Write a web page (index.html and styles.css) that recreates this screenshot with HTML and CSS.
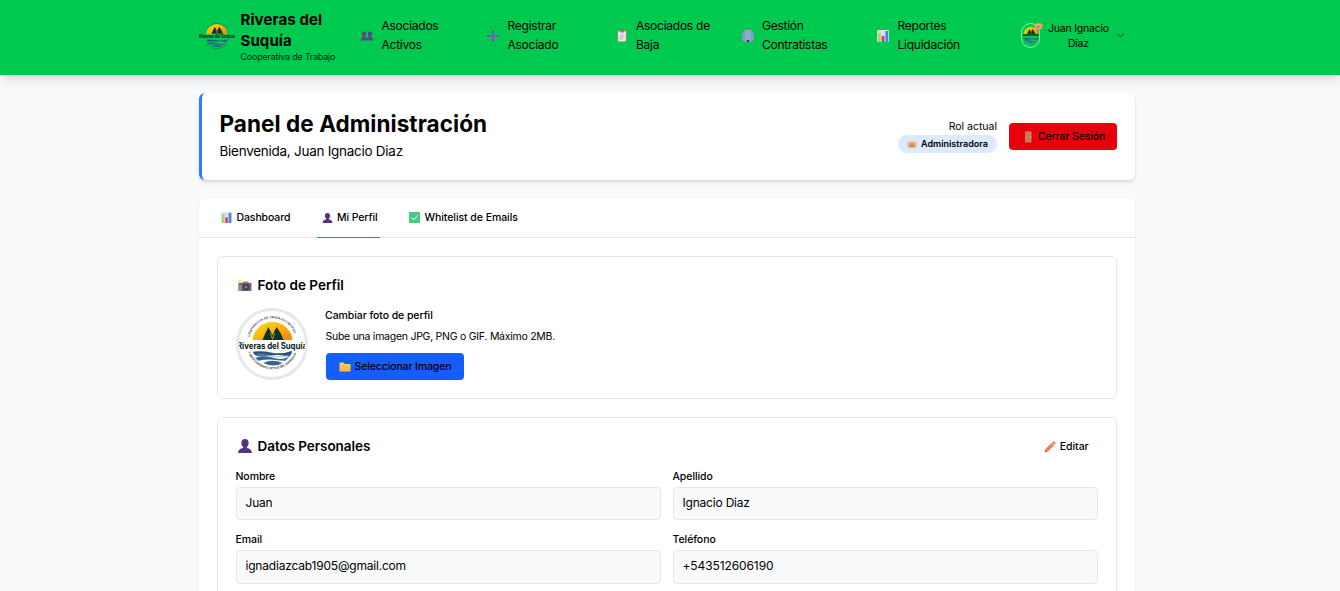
FILE: index.html
```html
<!DOCTYPE html>
<html lang="es">
<head>
<meta charset="utf-8">
<title>Riveras del Suquía</title>
<link rel="stylesheet" href="styles.css">
</head>
<body>
<svg class="defs" width="0" height="0" aria-hidden="true">
  <defs>
    <linearGradient id="sun" x1="0" y1="0" x2="1" y2="1"><stop offset="0" stop-color="#ffe500"/><stop offset=".5" stop-color="#fdb00f"/><stop offset="1" stop-color="#f57c13"/></linearGradient>
    <linearGradient id="folder" x1="0" y1="0" x2="0" y2="1"><stop offset="0" stop-color="#ffd24d"/><stop offset="1" stop-color="#ffb44a"/></linearGradient>
    <path id="arc-top" d="M12.500 28A23.500 23.500 0 0 1 58.500 28"/>
    <path id="arc-bottom" d="M11 43A26 26 0 0 0 60 43"/>
    <symbol id="scene" viewBox="14 14 42 44">
      <path d="M15.500 33a19.500 19 0 0 1 39 0z" fill="url(#sun)"/>
      <path d="M25 32l3-7 3-6 4 8 4-8 4 6 3 7z" fill="#07352c"/>
      <path d="M33 25l2 6 2-6" stroke="#d9ab13" stroke-width=".8" fill="none"/>
      <path d="M15.500 43q10-1 19 1t20-2q-1 4-3 6-10-3-20-1t-14-1z" fill="#28527f"/>
      <path d="M18 49q10-3 18 0t15-1l-3 4q-6 0-12-1t-15 1zM26 54q8-4 19 0-9 5-19 0z" fill="#346597"/>
      <path d="M20 46q10 0 16 1.500t15-1" fill="none" stroke="#8bb4d4" stroke-width=".8"/>
    </symbol>
    <symbol id="chart" viewBox="0 0 12 12"><rect width="12" height="12" rx="1" fill="#e4dfe8"/><path d="M0 3h12M0 6h12M0 9h12" stroke="#cbc3d0" stroke-width=".4"/><path d="M1 3h2.700v9H1z" fill="#9bdb68"/><path d="M4.700 6h2.700v6H4.700z" fill="#e62c63"/><path d="M8.400 1h2.800v11H8.400z" fill="#2f8fe4"/></symbol>
    <symbol id="user" viewBox="0 0 12 12"><path d="M6 0c2 0 3.200 1.400 3.100 3.400 0 1.600-.7 2.700-1.500 3.400v.9c2.500.4 4.100 1.500 4.400 4.300H0c.3-2.800 1.900-3.900 4.400-4.300v-.9C3.600 6.100 2.900 5 2.900 3.400 2.800 1.400 4 0 6 0z" fill="#55327d"/></symbol>
    <symbol id="crown" viewBox="0 0 12 12"><path d="M.3 4l2.200.8L3.500 2l1.500 2L6 1.500 7 4l1.500-2 1 2.800L11.700 4l-1.200 6.500h-9z" fill="#f5ad52"/><path d="M2.500 5l2 2M9.500 5l-2 2" stroke="#f37765"/><circle cx="6" cy="8" r="1.400" fill="#5379db"/><circle cx="3" cy="8.500" r=".7" fill="#e75b7b"/><circle cx="9" cy="8.500" r=".7" fill="#e75b7b"/></symbol>
  </defs>
</svg>

<header class="topbar">
  <div class="topbar-inner">
    <div class="brand">
      <svg class="brand-logo" viewBox="0 0 36 26"><use href="#scene" x="6" y="1" width="24" height="24"/><path d="M8 5q10-9 20 0M8 21q10 9 20 0" fill="none" stroke="#145735" stroke-width=".7" stroke-dasharray="1 .6"/><text x="0" y="15" textLength="36" class="logo-word small">Riveras del Suquía</text></svg>
      <div><div class="brand-name">Riveras del<br>Suquía</div><div class="brand-sub">Cooperativa de Trabajo</div></div>
    </div>
    <a class="nav-item"><svg class="ico12" viewBox="0 0 12 12"><path d="M3 1.500c2.700 0 2.600 3.800 1.200 4.600v.8l1.800.9 1.800-.9v-.8C6.400 5.300 6.300 1.500 9 1.500s2.600 3.800 1.200 4.600v.8c1.100.3 1.800 1.300 1.800 3.600H0c0-2.300.7-3.300 1.800-3.600v-.8C.4 5.300.3 1.500 3 1.500z" fill="#5d4388"/></svg><span>Asociados<br>Activos</span></a>
    <a class="nav-item"><svg class="ico12" viewBox="0 0 12 12"><path d="M6 .5v11M.5 6h11" stroke="#7659b5" stroke-width="2" stroke-linecap="round"/></svg><span>Registrar<br>Asociado</span></a>
    <a class="nav-item"><svg class="ico12" viewBox="0 0 12 12"><rect x="1.500" y=".5" width="9" height="11.500" rx="1" fill="#d28667"/><path d="M2.200 1.500h7.600v8.500l-1.300 1.300H2.200z" fill="#f0eaf5"/><path d="M4 0h4v2.500H4z" fill="#887b98"/><path d="M3.500 5h5M3.500 7h5M3.500 9h3" stroke="#b4a9c0"/></svg><span>Asociados de<br>Baja</span></a>
    <a class="nav-item"><svg class="ico12" viewBox="0 0 12 12"><path d="M0 2h3v10H0zM9 2h3v10H9z" fill="#8c849c"/><path d="M2.500 0h7v12h-7z" fill="#aaa2b9"/><path d="M3.500 1h5v8h-5zM.5 3h1.200v7H.5zM10.200 3h1.200v7h-1.200z" fill="#52bee9"/><path d="M5.200 1v8M6.900 1v8M3 3h6M3 5h6M3 7h6" stroke="#afa6ba" stroke-width=".4"/><path d="M4.700 10h2.600v2H4.700z" fill="#473755"/></svg><span>Gestión<br>Contratistas</span></a>
    <a class="nav-item"><svg class="ico12"><use href="#chart"/></svg><span>Reportes<br>Liquidación</span></a>
    <div class="account">
      <div class="avatar"><svg width="16" height="17"><use href="#scene" width="16" height="17"/><path d="M0 8h16" stroke="#173c26" stroke-width="1.500"/></svg><svg class="avatar-crown"><use href="#crown"/></svg></div>
      <div class="account-name">Juan Ignacio<br>Diaz</div>
      <svg class="chevron" viewBox="0 0 7 5"><path d="M.5.800l3 3 3-3" fill="none" stroke="#032" stroke-width=".9"/></svg>
    </div>
  </div>
</header>

<main class="page">
  <section class="hero">
    <div class="hero-text"><h1>Panel de Administración</h1><p class="welcome">Bienvenida, Juan Ignacio Diaz</p></div>
    <div class="hero-actions">
      <div class="role"><div class="role-label">Rol actual</div><div class="badge"><svg width="10" height="10"><use href="#crown"/></svg><span>Administradora</span></div></div>
      <button class="btn logout"><svg width="12" height="12" viewBox="0 0 12 12"><path d="M3 .500h6.500v11H3z" fill="#c98059"/><path d="M4 1.500h2v3.500H4zM7 1.500h1.800v3.500H7zM4 7h2v3.500H4zM7 7h1.800v3.500H7z" fill="#c37a55"/><circle cx="8.800" cy="6" r=".6" fill="#ffd76a"/></svg><span>Cerrar Sesión</span></button>
    </div>
  </section>

  <section class="panel">
    <nav class="tabs">
      <a class="tab t-dash"><svg width="11" height="11"><use href="#chart"/></svg><span>Dashboard</span></a>
      <a class="tab t-profile active"><svg width="11" height="10"><use href="#user"/></svg><span>Mi Perfil</span></a>
      <a class="tab t-white"><svg width="11" height="11" viewBox="0 0 11 11"><rect width="11" height="11" rx="1" fill="#45cc82"/><path d="M2.500 5.700l2.200 2.200 4-4.500" fill="none" stroke="#fff"/></svg><span>Whitelist de Emails</span></a>
    </nav>
    <div class="panel-body">
      <section class="card photo-card">
        <h2><svg width="14" height="13" viewBox="0 0 14 13"><path d="M.5 4h13v8H.5z" fill="#6c6471"/><path d="M5 2.500h5l1 1.500H4z" fill="#8b8490"/><path d="M.5 6h3v6h-3z" fill="#968d9c"/><circle cx="8" cy="8" r="3.200" fill="#41394b"/><circle cx="8" cy="8" r="1.600" fill="#81778e"/><path d="M0 1h4v3H0z" fill="#ffe68b"/></svg><span>Foto de Perfil</span></h2>
        <div class="photo-row">
          <div class="photo"><svg width="66" height="66" viewBox="2 2 66 66"><text class="ring"><textPath href="#arc-top" textLength="60">COOPERATIVA DE TRABAJO LIMITADA</textPath></text><use href="#scene" x="14" y="13" width="43" height="45"/><path d="M0 31h70v10.500H0z" fill="#fff"/><text x="0" y="39.500" textLength="70" lengthAdjust="spacingAndGlyphs" class="logo-word">Riveras del Suquía</text><text class="ring"><textPath href="#arc-bottom" textLength="62">Y MANTENIMIENTO ACTIVO DEL CORREDOR</textPath></text></svg></div>
          <div class="photo-info"><div class="label s-change">Cambiar foto de perfil</div><p class="s-hint">Sube una imagen JPG, PNG o GIF. Máximo 2MB.</p><button class="btn select"><svg width="12" height="10" viewBox="0 0 12 10"><path d="M.5.500h4L6 2h5.500v7.500H.5z" fill="url(#folder)"/></svg><span>Seleccionar Imagen</span></button></div>
        </div>
      </section>
      <section class="card data-card">
        <div class="card-head"><h2><svg width="14" height="14"><use href="#user"/></svg><span class="s-data">Datos Personales</span></h2><a class="edit"><svg width="12" height="12" viewBox="0 0 12 12"><path d="M.5 11.500l1-3.500 2.500 2.500z" fill="#a46b78"/><path d="M1.500 8l6-6L10 4.500l-6 6z" fill="#ff7e43"/><path d="M7.500 2l1-1L11 3.500l-1 1z" fill="#c9bdd0"/><path d="M8.500 1q1.200-1 2.300.2T11 3.500z" fill="#ed4965"/></svg><span>Editar</span></a></div>
        <div class="fields">
          <div><div class="label">Nombre</div><div class="value">Juan</div></div>
          <div><div class="label">Apellido</div><div class="value">Ignacio Diaz</div></div>
          <div><div class="label">Email</div><div class="value tall">ignadiazcab1905@gmail.com</div></div>
          <div><div class="label">Teléfono</div><div class="value tall phone">+543512606190</div></div>
        </div>
      </section>
    </div>
  </section>
</main>
</body>
</html>
```
FILE: styles.css
```css
* { box-sizing: border-box; }
html, body { height: 591px; overflow: hidden; }
body { margin: 0; background: #f9fafb; color: #000; font: 12px/18px Inter, "Liberation Sans", sans-serif; white-space: nowrap; }
h1, h2, p { margin: 0; }
svg { display: block; flex: none; }
.defs { position: absolute; }
.topbar { height: 75px; background: #00c950; box-shadow: 0 8px 12px -2px #0000001a, 0 3px 5px -3px #0000001a; }
.topbar-inner { width: 936px; height: 71px; margin-left: 199px; display: grid; grid-template-columns: 162px 126px 128.500px 126px 135.500px 143px 1fr; align-items: center; }
.brand { display: flex; align-items: center; gap: 5.5px; }
.brand-logo { width: 36px; height: 26px; }
.brand-name { font-size: 15px; line-height: 21px; font-weight: 700; letter-spacing: .1px; }
.brand-sub { font-size: 9px; line-height: 12px; letter-spacing: -.22px; opacity: .85; }
.logo-word { font-weight: 700; font-size: 9px; fill: #061d20; }
.logo-word.small { font-size: 4.2px; }
.ring { font-size: 3px; font-weight: 600; fill: #333; }
.nav-item { display: flex; align-items: center; gap: 8.5px; line-height: 19px; letter-spacing: -.25px; }
.nav-item span { margin-top: -2px; }
.ico12 { width: 12px; height: 12px; }
.account { display: flex; align-items: center; font-size: 10.5px; line-height: 15px; text-align: center; letter-spacing: -.22px; }
.avatar { position: relative; width: 19px; height: 25px; border: 1px solid #8ae9ae; border-radius: 10px; display: flex; align-items: center; justify-content: center; margin: 0 8px 0 1px; }
.avatar-crown { position: absolute; width: 9px; height: 9px; right: -4px; top: -3px; }
.chevron { width: 7px; height: 5px; margin-left: 8px; }
.page { width: 936px; margin: 18px 0 0 199px; }
.hero { height: 87px; padding: 0 18px 0 17.5px; display: flex; align-items: center; justify-content: space-between; background: #fff; border-left: 3px solid #2b7fff; border-radius: 6px; box-shadow: 0 3px 5px -1px #0000001a, 0 1px 3px #0000001a; }
h1 { font-size: 22.5px; line-height: 27px; font-weight: 700; letter-spacing: .06px; margin-top: -1px; }
.welcome { font-size: 13.5px; line-height: 21px; margin-top: 4px; letter-spacing: -.27px; }
.hero-actions { display: flex; align-items: center; gap: 12px; }
.role { text-align: right; font-size: 10.5px; line-height: 15px; padding-bottom: 1px; }
.badge { height: 18px; width: 99px; border-radius: 9px; background: #dbeafe; display: flex; align-items: center; gap: 4px; padding-left: 9px; font-size: 9px; font-weight: 600; margin-top: 1px; }
.badge span { margin-top: -1px; }
.btn { border: 0; height: 27px; border-radius: 4px; font: 500 10.5px/15px Inter, "Liberation Sans", sans-serif; letter-spacing: -.12px; display: flex; align-items: center; color: #000; padding: 0 12px; }
.logout { width: 108px; padding-left: 13px; background: #e7000b; gap: 4px; }
.panel { margin-top: 18px; height: 393px; background: #fff; border-radius: 6px 6px 0 0; box-shadow: 0 1px 3px #0000001a; }
.tabs { display: flex; height: 40px; border-bottom: 1px solid #e5e7eb; padding-left: 18px; }
.tab { display: flex; align-items: center; gap: 4.5px; height: 40px; font-size: 10.5px; font-weight: 500; letter-spacing: -.1px; padding: 1px 4px 0; border-bottom: 1px solid transparent; }
.tab svg { margin-top: -1px; }
.t-dash { width: 73px; margin-right: 27px; }
.t-profile { width: 63px; margin-right: 24px; padding-left: 4.500px; }
.active { border-color: #2b7fff; }
.t-white { padding-left: 5px; letter-spacing: -.06px; }
.panel-body { padding: 18px 18px 0; display: grid; gap: 18px; }
.card { border: 1px solid #e5e7eb; border-radius: 6px; padding: 18px; }
.photo-card { height: 143px; }
.data-card { height: 174px; border-bottom: 0; border-radius: 6px 6px 0 0; padding-bottom: 0; }
h2 { display: flex; align-items: center; gap: 5.500px; height: 20px; margin-bottom: 1px; font-size: 13.5px; font-weight: 600; padding-left: 2px; }
.s-data { letter-spacing: -.06px; }
.photo-row { display: flex; gap: 17.5px; margin-top: 13px; }
.photo { width: 72px; height: 72px; border: 3px solid #e5e7eb; border-radius: 50%; overflow: hidden; background: #fff; }
.photo-info { font-size: 10.5px; line-height: 15px; }
.s-hint { margin: 6px 0 9px; letter-spacing: -.26px; }
.select { width: 138px; margin-left: .5px; background: #155dfc; gap: 4px; padding-left: 12.500px; }
.card-head { display: flex; justify-content: space-between; }
.edit { display: flex; align-items: center; gap: 4px; font-size: 10.5px; font-weight: 500; letter-spacing: -.08px; padding-right: 9.500px; }
.fields { display: grid; grid-template-columns: 1fr 1fr; gap: 12px; margin-top: 12px; }
.label { font-size: 10.5px; line-height: 15px; font-weight: 500; letter-spacing: -.07px; margin-left: -.500px; }
.value { height: 33px; margin-top: 3px; border: 1px solid #e5e7eb; border-radius: 4px; background: #f9fafb; padding: 6px 8.500px; font-size: 12px; line-height: 18px; letter-spacing: -.2px; }
.value.tall { height: 34px; }
.value.phone { letter-spacing: -.1px; }
```
